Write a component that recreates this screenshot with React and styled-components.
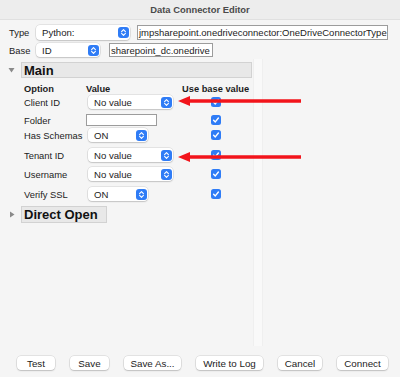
import React from 'react'
import styled, { createGlobalStyle } from 'styled-components'

const GlobalStyle = createGlobalStyle`
  html, body { margin: 0; padding: 0; background: #f5f5f5; }
  body { font-family: "Liberation Sans", Arial, sans-serif; color: #1c1c1c; }
`

const Window = styled.div`
  position: relative;
  width: 400px;
  height: 377px;
  display: flex;
  flex-direction: column;
  background: #f5f5f5;
  overflow: hidden;
`

const TitleBar = styled.div`
  height: 20px;
  flex: none;
  display: flex;
  align-items: center;
  justify-content: center;
  font-size: 9.4px;
  font-weight: bold;
  color: #4a4a4a;
  background: #ededed;
  border-bottom: 1px solid #e0e0e0;
  box-sizing: border-box;
`

const TopForm = styled.div`
  display: flex;
  flex-direction: column;
  gap: 3px;
  padding: 5px 0 0 9px;
`

const FormRow = styled.div`
  display: flex;
  align-items: center;
  height: ${p => p.$h}px;
`

const Label = styled.span`
  width: ${p => p.$w || 27}px;
  flex: none;
  font-size: 9.4px;
  white-space: nowrap;
`

const Popup = styled.div`
  width: ${p => p.$w}px;
  height: ${p => p.$h || 14}px;
  margin-left: ${p => p.$ml || 0}px;
  margin-right: ${p => p.$mr || 0}px;
  flex: none;
  display: flex;
  align-items: center;
  justify-content: space-between;
  padding: 0 1px 0 6px;
  box-sizing: border-box;
  background: #fff;
  border-radius: 4px;
  box-shadow: 0 0 0 0.5px rgba(0, 0, 0, 0.14), 0 1px 1.5px rgba(0, 0, 0, 0.14);
  font-size: 9.6px;
  color: #1c1c1c;
`

const Stepper = styled.span`
  width: 11px;
  height: 11px;
  border-radius: 3px;
  background: #2f7cf6;
  display: flex;
  align-items: center;
  justify-content: center;
`

const TextBox = styled.div`
  width: ${p => p.$w}px;
  height: ${p => p.$h || 15}px;
  flex: none;
  display: flex;
  align-items: center;
  padding-left: 1px;
  box-sizing: border-box;
  background: #fff;
  border: 1px solid #9c9c9c;
  font-size: 9.5px;
  white-space: nowrap;
  overflow: hidden;
`

const MainArea = styled.div`
  flex: 1;
  display: flex;
  margin-top: 2px;
`

const LeftPanel = styled.div`
  width: 253px;
  flex: none;
  padding-top: 3px;
  box-sizing: border-box;
`

const Splitter = styled.div`
  width: 10px;
  flex: none;
  background: #f9f9f9;
  border-left: 1px solid #efefef;
  border-right: 1px solid #efefef;
  box-sizing: border-box;
`

const SectionHead = styled.div`
  display: flex;
  align-items: center;
  margin-top: ${p => p.$mt || 0}px;
`

const Disclosure = styled.span`
  width: 21px;
  flex: none;
  display: flex;
  justify-content: center;
  padding-left: 2px;
  box-sizing: border-box;
`

const HeadBox = styled.div`
  width: ${p => p.$w}px;
  height: ${p => p.$h}px;
  display: flex;
  align-items: center;
  padding-left: 2px;
  box-sizing: border-box;
  background: #e8e8e8;
  border: 1px solid #d2d2d2;
  font-size: 13px;
  font-weight: bold;
  color: #111;
`

const OptionGrid = styled.div`
  display: flex;
  flex-direction: column;
  margin-left: 24px;
`

const OptionRow = styled.div`
  display: grid;
  grid-template-columns: 62px 96px 67px;
  align-items: center;
  height: ${p => p.$h}px;
  margin-top: ${p => p.$mt || 0}px;
`

const ColHead = styled.span`
  font-size: 9.3px;
  font-weight: bold;
  white-space: nowrap;
`

const CheckCell = styled.span`
  display: flex;
  justify-content: center;
`

const Check = styled.span`
  width: 10px;
  height: 10px;
  border-radius: 2.5px;
  background: #2f7cf6;
  display: flex;
  align-items: center;
  justify-content: center;
`

const Footer = styled.div`
  height: 31px;
  flex: none;
  display: flex;
  gap: 15px;
  padding: 10px 0 0 17px;
  box-sizing: border-box;
`

const Button = styled.div`
  width: ${p => p.$w}px;
  height: 14px;
  display: flex;
  align-items: center;
  justify-content: center;
  background: #fff;
  border-radius: 4px;
  box-shadow: 0 0 0 0.5px rgba(0, 0, 0, 0.14), 0 1px 1.5px rgba(0, 0, 0, 0.16);
  font-size: 9.8px;
  color: #1c1c1c;
  white-space: nowrap;
`

const Annotation = styled.svg`
  position: absolute;
  left: 176px;
  top: ${p => p.$top}px;
  pointer-events: none;
`

const StepIcon = () => (
  <svg width="7" height="9" viewBox="0 0 7 9">
    <path d="M1.6 3.6 L3.5 1.7 L5.4 3.6 M1.6 5.4 L3.5 7.3 L5.4 5.4" fill="none" stroke="#fff" strokeWidth="1.1" strokeLinecap="round" strokeLinejoin="round" />
  </svg>
)

const Select = ({ value, w, ml, mr, h }) => (
  <Popup $w={w} $ml={ml} $mr={mr} $h={h}>
    <span>{value}</span>
    <Stepper><StepIcon /></Stepper>
  </Popup>
)

const CheckBox = () => (
  <CheckCell>
    <Check>
      <svg width="8" height="8" viewBox="0 0 8 8">
        <path d="M1.6 4.2 L3.3 5.9 L6.4 2" fill="none" stroke="#fff" strokeWidth="1.4" strokeLinecap="round" strokeLinejoin="round" />
      </svg>
    </Check>
  </CheckCell>
)

const Arrow = ({ top }) => (
  <Annotation $top={top} width="128" height="12" viewBox="0 0 128 12">
    <polygon points="2,6 14,1 14,4.3 125,4.3 125,7.7 14,7.7 14,11" fill="#f2141b" />
  </Annotation>
)

const options = [
  { name: 'Client ID', kind: 'select', value: 'No value', w: 85, h: 14, mt: 0 },
  { name: 'Folder', kind: 'text', w: 71, h: 12, mt: 5 },
  { name: 'Has Schemas', kind: 'select', value: 'ON', w: 60, h: 14, mt: 2 },
  { name: 'Tenant ID', kind: 'select', value: 'No value', w: 85, h: 14, mt: 6 },
  { name: 'Username', kind: 'select', value: 'No value', w: 85, h: 14, mt: 5 },
  { name: 'Verify SSL', kind: 'select', value: 'ON', w: 60, h: 14, mt: 6 },
]

const buttons = [
  { label: 'Test', w: 38 },
  { label: 'Save', w: 39 },
  { label: 'Save As...', w: 57 },
  { label: 'Write to Log', w: 67 },
  { label: 'Cancel', w: 44 },
  { label: 'Connect', w: 51 },
]

export default function App() {
  return (
    <Window>
      <GlobalStyle />
      <TitleBar>Data Connector Editor</TitleBar>

      <TopForm>
        <FormRow $h={15}>
          <Label>Type</Label>
          <Select value="Python:" w={94} mr={7} h={15} />
          <TextBox $w={251}>jmpsharepoint.onedriveconnector:OneDriveConnectorType</TextBox>
        </FormRow>
        <FormRow $h={14}>
          <Label>Base</Label>
          <Select value="ID" w={64} mr={9} />
          <TextBox $w={104} $h={14}>sharepoint_dc.onedrive</TextBox>
        </FormRow>
      </TopForm>

      <MainArea>
        <LeftPanel>
          <SectionHead>
            <Disclosure>
              <svg width="7" height="6" viewBox="0 0 7 6"><polygon points="0.5,1 6.5,1 3.5,5.5" fill="#8a8a8a" /></svg>
            </Disclosure>
            <HeadBox $w={231} $h={16}>Main</HeadBox>
          </SectionHead>

          <OptionGrid>
            <OptionRow $h={12} $mt={5}>
              <ColHead>Option</ColHead>
              <ColHead>Value</ColHead>
              <ColHead>Use base value</ColHead>
            </OptionRow>
            {options.map(o => (
              <OptionRow key={o.name} $h={o.h} $mt={o.mt}>
                <Label $w={62}>{o.name}</Label>
                {o.kind === 'select'
                  ? <Select value={o.value} w={o.w} ml={2} />
                  : <TextBox $w={o.w} $h={o.h} />}
                <CheckBox />
              </OptionRow>
            ))}
          </OptionGrid>

          <SectionHead $mt={5}>
            <Disclosure>
              <svg width="6" height="7" viewBox="0 0 6 7"><polygon points="1,0.5 5.5,3.5 1,6.5" fill="#8a8a8a" /></svg>
            </Disclosure>
            <HeadBox $w={86} $h={17}>Direct Open</HeadBox>
          </SectionHead>
        </LeftPanel>
        <Splitter />
      </MainArea>

      <Footer>
        {buttons.map(b => (
          <Button key={b.label} $w={b.w}>{b.label}</Button>
        ))}
      </Footer>

      <Arrow top={95} />
      <Arrow top={151} />
    </Window>
  )
}
